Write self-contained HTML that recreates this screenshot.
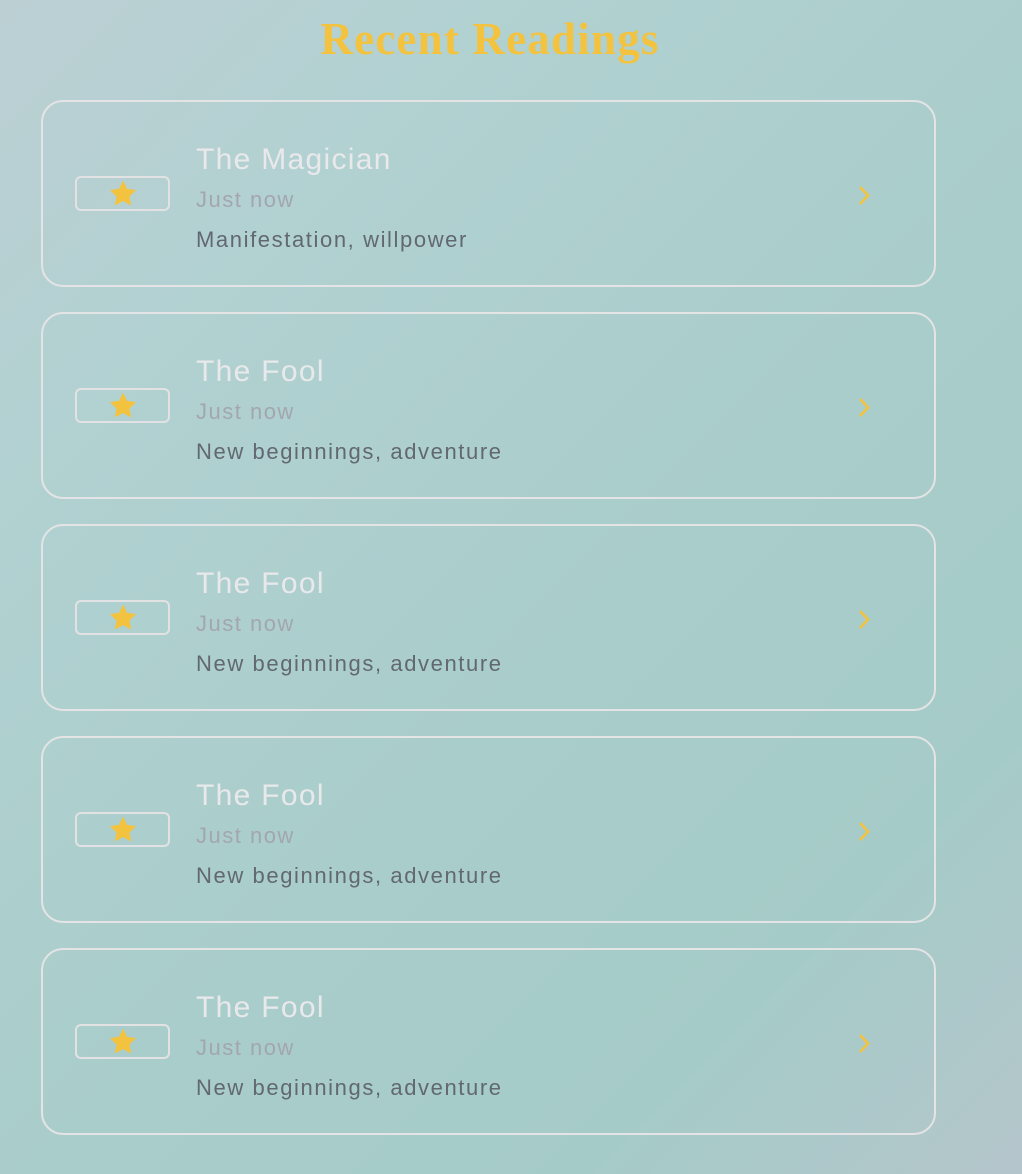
<!DOCTYPE html>
<html><head><meta charset="utf-8"><style>
html,body{margin:0;padding:0}
body{width:1022px;height:1174px;overflow:hidden;position:relative;
background:linear-gradient(135deg,#bcd0d4 0%,#b1d1d1 25%,#a9cdcb 55%,#a5cbc8 80%,#b5c6cb 100%);
font-family:"Liberation Sans",sans-serif}
h1{position:absolute;left:0;width:980px;top:12px;margin:0;text-align:center;font-family:"Liberation Serif",serif;font-weight:bold;font-size:45px;letter-spacing:1.2px;color:#f3c33f;line-height:54px}
.card{position:absolute;left:41px;width:891px;height:183px;border:2px solid #e4e4e6;border-radius:22px;box-sizing:content-box}
.box{position:absolute;left:32px;top:74px;width:91px;height:31px;border:2px solid #e2e2e4;border-radius:6px}
.box svg{position:absolute;left:31px;top:1px}
.t{position:absolute;left:153px;top:40px;font-size:30px;letter-spacing:1.3px;color:#e9e9ec;line-height:36px;white-space:nowrap}
.s{position:absolute;left:153px;top:84px;font-size:22px;letter-spacing:1.5px;color:#a3a6ae;line-height:28px}
.d{position:absolute;left:153px;top:124px;font-size:22px;letter-spacing:1.6px;color:#62686f;line-height:28px;white-space:nowrap}
.c{position:absolute;left:812px;top:82px}
</style></head><body>
<h1>Recent Readings</h1>

<div class="card" style="top:100px"><div class="box"><svg width="30" height="30" viewBox="0 0 24 24"><path d="M12 2.3l2.9 6.1 6.6.8-4.9 4.6 1.3 6.6L12 17.1l-5.9 3.3 1.3-6.6L2.5 9.2l6.6-.8z" fill="#f3c33f" stroke="#f3c33f" stroke-width="1" stroke-linejoin="round"/></svg></div>
<div class="t">The Magician</div><div class="s">Just now</div><div class="d">Manifestation, willpower</div>
<svg class="c" width="20" height="24" viewBox="0 0 20 24"><path d="M5 3l8 8.5-8 8.5" fill="none" stroke="#f3c33f" stroke-width="2.6"/></svg></div>

<div class="card" style="top:312px"><div class="box"><svg width="30" height="30" viewBox="0 0 24 24"><path d="M12 2.3l2.9 6.1 6.6.8-4.9 4.6 1.3 6.6L12 17.1l-5.9 3.3 1.3-6.6L2.5 9.2l6.6-.8z" fill="#f3c33f" stroke="#f3c33f" stroke-width="1" stroke-linejoin="round"/></svg></div>
<div class="t">The Fool</div><div class="s">Just now</div><div class="d">New beginnings, adventure</div>
<svg class="c" width="20" height="24" viewBox="0 0 20 24"><path d="M5 3l8 8.5-8 8.5" fill="none" stroke="#f3c33f" stroke-width="2.6"/></svg></div>

<div class="card" style="top:524px"><div class="box"><svg width="30" height="30" viewBox="0 0 24 24"><path d="M12 2.3l2.9 6.1 6.6.8-4.9 4.6 1.3 6.6L12 17.1l-5.9 3.3 1.3-6.6L2.5 9.2l6.6-.8z" fill="#f3c33f" stroke="#f3c33f" stroke-width="1" stroke-linejoin="round"/></svg></div>
<div class="t">The Fool</div><div class="s">Just now</div><div class="d">New beginnings, adventure</div>
<svg class="c" width="20" height="24" viewBox="0 0 20 24"><path d="M5 3l8 8.5-8 8.5" fill="none" stroke="#f3c33f" stroke-width="2.6"/></svg></div>

<div class="card" style="top:736px"><div class="box"><svg width="30" height="30" viewBox="0 0 24 24"><path d="M12 2.3l2.9 6.1 6.6.8-4.9 4.6 1.3 6.6L12 17.1l-5.9 3.3 1.3-6.6L2.5 9.2l6.6-.8z" fill="#f3c33f" stroke="#f3c33f" stroke-width="1" stroke-linejoin="round"/></svg></div>
<div class="t">The Fool</div><div class="s">Just now</div><div class="d">New beginnings, adventure</div>
<svg class="c" width="20" height="24" viewBox="0 0 20 24"><path d="M5 3l8 8.5-8 8.5" fill="none" stroke="#f3c33f" stroke-width="2.6"/></svg></div>

<div class="card" style="top:948px"><div class="box"><svg width="30" height="30" viewBox="0 0 24 24"><path d="M12 2.3l2.9 6.1 6.6.8-4.9 4.6 1.3 6.6L12 17.1l-5.9 3.3 1.3-6.6L2.5 9.2l6.6-.8z" fill="#f3c33f" stroke="#f3c33f" stroke-width="1" stroke-linejoin="round"/></svg></div>
<div class="t">The Fool</div><div class="s">Just now</div><div class="d">New beginnings, adventure</div>
<svg class="c" width="20" height="24" viewBox="0 0 20 24"><path d="M5 3l8 8.5-8 8.5" fill="none" stroke="#f3c33f" stroke-width="2.6"/></svg></div>
</body></html>
